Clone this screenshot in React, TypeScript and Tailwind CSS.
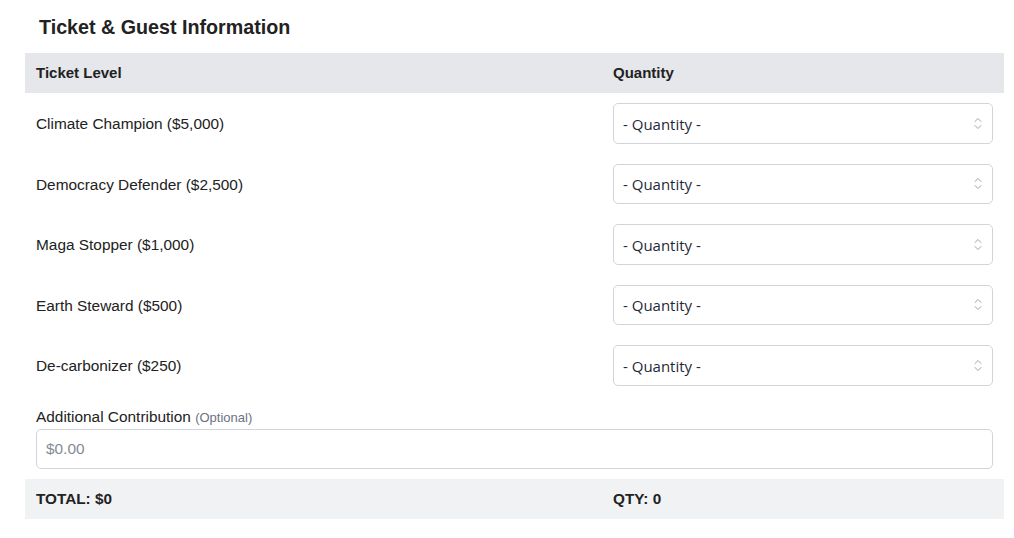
import React from "react";

const tickets = [
  "Climate Champion ($5,000)",
  "Democracy Defender ($2,500)",
  "Maga Stopper ($1,000)",
  "Earth Steward ($500)",
  "De-carbonizer ($250)",
];

const SelectArrows = () => (
  <svg width="8" height="13" viewBox="0 0 8 13" fill="none" className="shrink-0">
    <path d="M1 4.5 L4 1.5 L7 4.5" stroke="#9ca3af" strokeWidth="1" strokeLinecap="round" strokeLinejoin="round" />
    <path d="M1 8.5 L4 11.5 L7 8.5" stroke="#9ca3af" strokeWidth="1" strokeLinecap="round" strokeLinejoin="round" />
  </svg>
);

const QuantitySelect = () => (
  <div className="flex h-[40.5px] items-center justify-between rounded-[5px] border border-[#d1d5db] bg-white pl-[9px] pr-[10px]">
    <span className="pt-[1px] text-[15px] text-[#1f2937] [font-family:'Open_Sans','Noto_Sans',sans-serif]">- Quantity -</span>
    <SelectArrows />
  </div>
);

export default function App() {
  return (
    <div className="min-h-screen bg-white px-[25px] text-[#222] [font-family:'Liberation_Sans',Arial,sans-serif]">
      <h2 className="pl-[14px] pt-[13px] mb-3 text-[19.7px] font-bold leading-[28px] text-[#222]">
        Ticket &amp; Guest Information
      </h2>

      <div className="w-[979px]">
        {/* column headings */}
        <div className="grid h-10 grid-cols-[577px_1fr] items-center bg-[#e5e7eb] text-[15px] font-bold">
          <div className="px-[11px]">Ticket Level</div>
          <div className="px-[11px]">Quantity</div>
        </div>

        {tickets.map((t) => (
          <div key={t} className="grid grid-cols-[577px_1fr] items-center py-[10px]">
            <div className="px-[11px] pt-[1px] text-[15.4px]">{t}</div>
            <div className="px-[11px]">
              <QuantitySelect />
            </div>
          </div>
        ))}

        <div className="px-[11px] pt-[10px] pb-[10px]">
          <div className="text-[15.4px] leading-[22.5px]">
            Additional Contribution <span className="text-[13px] text-[#6b7280]">(Optional)</span>
          </div>
          <div className="flex h-10 items-center rounded-[5px] border border-[#d1d5db] px-[9px]">
            <span className="text-[15.4px] text-[#858b94]">$0.00</span>
          </div>
        </div>

        {/* totals */}
        <div className="grid h-10 grid-cols-[577px_1fr] items-center bg-[#f1f2f4] text-[15.3px] font-bold">
          <div className="px-[11px]">TOTAL: $0</div>
          <div className="px-[11px]">QTY: 0</div>
        </div>
      </div>
    </div>
  );
}
